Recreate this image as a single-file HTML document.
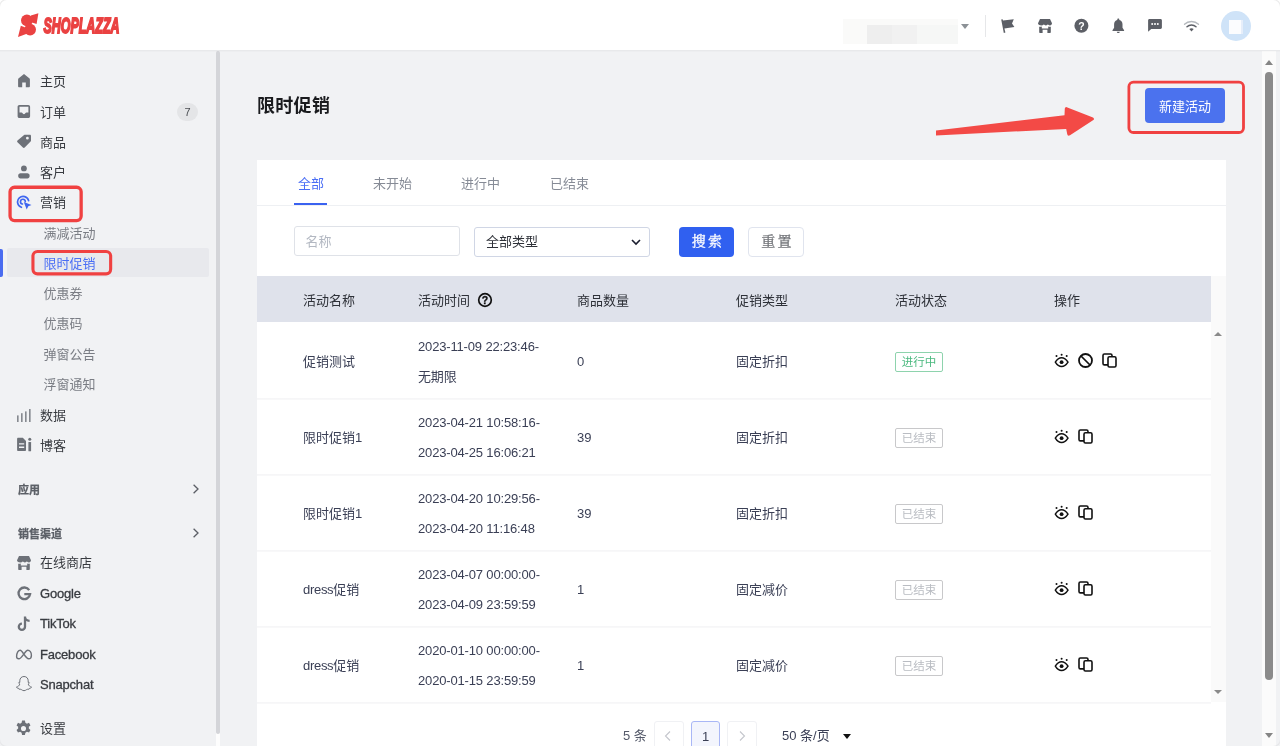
<!DOCTYPE html>
<html lang="zh-CN">
<head>
<meta charset="utf-8">
<title>限时促销</title>
<style>
*{box-sizing:border-box;margin:0;padding:0}
html,body{width:1280px;height:746px;overflow:hidden;background:#f1f2f4}
body{position:relative;will-change:transform;font-family:"Liberation Sans","Noto Sans CJK SC",sans-serif;font-size:13px;color:#3a3f52}
.abs{position:absolute}
/* header */
#hdr{position:absolute;left:0;top:0;width:1280px;height:50px;background:#fff;box-shadow:0 1px 0 #e8e9eb,0 2px 1px rgba(0,0,0,.015);z-index:5}
/* sidebar */
#side{position:absolute;left:0;top:50px;width:216px;height:696px;background:#f1f2f4}
#sbar{position:absolute;left:216px;top:51px;width:4px;height:683px;background:#d4d5d9;border-radius:2px;z-index:2}
.mi{position:absolute;left:40px;height:20px;line-height:20px;font-size:13px;color:#383b40;white-space:nowrap}
.smi{position:absolute;left:43.6px;height:20px;line-height:20px;font-size:13px;color:#7a7d84;white-space:nowrap}
.ic{position:absolute;left:16px;width:16px;height:16px}
.sec{position:absolute;left:18px;font-size:11px;font-weight:bold;color:#5c6067;height:16px;line-height:16px;-webkit-text-stroke:.25px #5c6067}
/* main */
#card{position:absolute;left:257px;top:160px;width:969px;height:586px;background:#fff}
.tab{position:absolute;top:174px;height:20px;line-height:20px;font-size:13px;color:#868b96;white-space:nowrap}
.th{position:absolute;top:291px;height:20px;line-height:20px;font-size:13px;color:#2e3138;white-space:nowrap}
.td{position:absolute;height:20px;line-height:20px;font-size:13px;color:#3a3f55;white-space:nowrap}
.dt{letter-spacing:-.16px}
.rowline{position:absolute;left:257px;width:954px;height:2px;background:linear-gradient(#f5f5f7,#f9f9fa)}
.tag{position:absolute;left:895px;width:48px;height:20px;border:1px solid #c8c8ca;border-radius:2px;font-size:11.5px;line-height:18px;text-align:center;color:#b9bcc2;background:#fff}
.tag.on{border-color:#8ed3ad;color:#4bb97f}
</style>
</head>
<body>
<div id="hdr">
<svg class="abs" style="left:18px;top:13px" width="21" height="25" viewBox="0 0 21 25"><g fill="#ea4242"><circle cx="8.900" cy="7.300" r="5.900"/><circle cx="12.100" cy="16.600" r="5.900"/><path d="M12.800 2.400L20.400 0.200L18.600 11L14 9.600Z"/><path d="M2.800 12.800L0 24L8.200 21L6.800 14.200Z"/></g></svg>
<svg class="abs" style="left:40px;top:12px" width="84" height="26" viewBox="0 0 84 26"><text x="7" y="21.100" font-family="Liberation Sans, sans-serif" font-weight="bold" font-style="italic" font-size="22" fill="#ea4242" stroke="#ea4242" stroke-width="1.900" stroke-linejoin="miter" transform="scale(0.5,1)" textLength="152" lengthAdjust="spacingAndGlyphs">SHOPLAZZA</text></svg>
<div class="abs" style="left:843px;top:19px;width:115px;height:25px;background:#fafaf9"></div>
<div class="abs" style="left:867px;top:25px;width:25px;height:19px;background:#eeeeee"></div>
<div class="abs" style="left:892px;top:25px;width:25px;height:19px;background:#f1f1f1"></div>
<div class="abs" style="left:917px;top:25px;width:41px;height:19px;background:#f6f7f6"></div>
<div class="abs" style="left:961px;top:24px;width:0;height:0;border-left:4px solid transparent;border-right:4px solid transparent;border-top:5px solid #8c9196"></div>
<div class="abs" style="left:985px;top:15px;width:1px;height:22px;background:#e6e7e9"></div>
<svg class="abs" style="left:1000px;top:18px" width="16" height="16" viewBox="0 0 16 16"><path fill="#5c5f66" d="M1.2 1.6L2.6 1.2L3 2.6L13.8 1.2L12 5.6L14.4 9L4.4 10.4L5.4 14.6L3.8 15Z"/></svg>
<svg class="abs" style="left:1037px;top:18px" width="16" height="16" viewBox="0 0 16 16"><path fill="#5c5f66" d="M3 1h10l2 4.2c0 1.2-.9 2.2-2.1 2.2-.9 0-1.6-.5-2-1.200-.4.700-1.100 1.200-2 1.200s-1.600-.5-2-1.200c-.4.700-1.100 1.200-2 1.200C1.900 7.400 1 6.400 1 5.200ZM2.200 8.700c.8.300 1.800.2 2.600-.3V10.500h6.400V8.400c.8.500 1.800.6 2.600.3V14c0 .6-.4 1-1 1h-2.400v-3.200h-4.800V15H3.200c-.6 0-1-.4-1-1Z"/></svg>
<svg class="abs" style="left:1074px;top:18px" width="15" height="15" viewBox="0 0 15 15"><circle cx="7.4" cy="7.700" r="7" fill="#5c5f66"/><text x="7.400" y="11.600" font-family="Liberation Sans, sans-serif" font-weight="bold" font-size="10.500" text-anchor="middle" fill="#fff">?</text></svg>
<svg class="abs" style="left:1111px;top:18px" width="15" height="16" viewBox="0 0 15 16"><path fill="#5c5f66" d="M7.300 0.600c.6 0 1 .4 1 1v.3c2 .5 3.200 2.200 3.200 4.400v3.500l1.600 2.400v.8H1.500v-.8l1.600-2.400V6.300c0-2.200 1.200-3.900 3.200-4.400v-.3c0-.6.400-1 1-1ZM5.800 13.700h3c0 .8-.7 1.300-1.500 1.300s-1.500-.5-1.500-1.300Z"/></svg>
<svg class="abs" style="left:1147px;top:18px" width="16" height="16" viewBox="0 0 16 16"><path fill="#5c5f66" d="M2.500 1h11c.8 0 1.400.6 1.400 1.400v7.200c0 .8-.6 1.400-1.400 1.400H4.200L1.100 13.700V2.400C1.100 1.600 1.700 1 2.500 1Z"/><g fill="#fff"><circle cx="5.200" cy="6" r="1"/><circle cx="8" cy="6" r="1"/><circle cx="10.800" cy="6" r="1"/></g></svg>
<svg class="abs" style="left:1183px;top:19px" width="17" height="14" viewBox="0 0 17 14"><g fill="none" stroke-linecap="round"><path d="M1.500 5.200C5.300 1.600 11.700 1.600 15.500 5.200" stroke="#b4b8bd" stroke-width="1.300"/><path d="M4 7.700C6.500 5.400 10.500 5.400 13 7.700" stroke="#5c5f66" stroke-width="1.500"/></g><path fill="#5c5f66" d="M6.300 10C7.500 8.900 9.500 8.900 10.700 10L8.500 12.400Z"/></svg>
<div class="abs" style="left:1221px;top:11px;width:30px;height:30px;border-radius:50%;background:#cfe3f8"></div>
<div class="abs" style="left:1229px;top:20px;width:14px;height:14px;background:#fbfcfe;border-right:2px solid #e6eefa"></div>
</div>
<div id="side">
<!-- all coords relative to body; #side is static bg -->
</div>
<div id="nav">
<svg class="abs" style="left:17px;top:73px" width="14" height="15" viewBox="0 0 14 15"><path fill="#6d7178" d="M7 1L12.300 5.200c.4.300.6.700.6 1.200V13.200c0 .6-.5 1.100-1.100 1.100H8.800V9.600H5.200v4.700H2.200c-.6 0-1.100-.5-1.100-1.100V6.400c0-.5.200-.9.600-1.200Z"/></svg>
<div class="mi" style="top:71.9px;">主页</div>
<svg class="abs" style="left:17px;top:105px" width="14" height="14" viewBox="0 0 14 14"><path fill="#6d7178" fill-rule="evenodd" d="M2.400 0H11.300c1 0 1.800.8 1.800 1.800V11.200c0 1-.8 1.800-1.800 1.800H2.400c-1 0-1.800-.8-1.800-1.800V1.800C.6.800 1.400 0 2.400 0ZM2.500 1.700V7.600H4.600c.4 0 .6.200.8.500.3.700.8 1.100 1.550 1.100s1.250-.4 1.550-1.100c.2-.3.400-.5.800-.5h2.100V1.700Z"/></svg>
<div class="mi" style="top:103.2px;">订单</div>
<div class="abs" style="left:177px;top:102.5px;width:21px;height:18px;border-radius:9px;background:#e4e5e7;font-size:11px;line-height:18px;text-align:center;color:#4a4d52">7</div>
<svg class="abs" style="left:16px;top:134px" width="16" height="15" viewBox="0 0 16 15"><path fill="#6d7178" fill-rule="evenodd" d="M9 0.700h4.800c.7 0 1.200.5 1.200 1.200V6.600c0 .4-.1.700-.4.900L8.700 13.600c-.5.500-1.300.5-1.800 0L1.500 8.300c-.5-.5-.5-1.300 0-1.800L8.100 1.100c.2-.3.500-.4.900-.4ZM11.400 2.800a1.400 1.400 0 1 0 0 2.800 1.400 1.400 0 0 0 0-2.800Z"/></svg>
<div class="mi" style="top:132.6px;">商品</div>
<svg class="abs" style="left:17px;top:164px" width="14" height="15" viewBox="0 0 14 15"><circle cx="6.900" cy="4.400" r="2.900" fill="#6d7178"/><path fill="#6d7178" d="M3.400 9.300h7c1.200 0 2.200 1 2.200 2.200v.7c0 1.200-1 2.200-2.200 2.200h-7c-1.200 0-2.200-1-2.200-2.200v-.7c0-1.200 1-2.200 2.200-2.200Z"/></svg>
<div class="mi" style="top:163.0px;">客户</div>
<svg class="abs" style="left:16px;top:195px" width="16" height="15" viewBox="0 0 16 15"><g fill="none" stroke="#3f66f0" stroke-width="1.700" stroke-linecap="round"><path d="M12.600 5.600A5.600 5.600 0 1 0 5.400 12.300"/><path d="M9.300 6.600A2.400 2.400 0 1 0 6.400 9"/></g><path fill="#3f66f0" d="M7.800 7L15.500 9.900L12.300 11.200L10.700 14.500Z"/></svg>
<div class="mi" style="top:193.0px;">营销</div>
<div class="smi" style="top:223.6px;">满减活动</div>
<div class="abs" style="left:7px;top:248px;width:202px;height:29px;background:#e8e9ed;border-radius:2px"></div>
<div class="abs" style="left:0;top:249px;width:3px;height:28px;background:#4a6cf0;border-radius:0 2px 2px 0"></div>
<div class="smi" style="top:253.6px;color:#4a6ef5">限时促销</div>
<div class="smi" style="top:284.0px;">优惠券</div>
<div class="smi" style="top:314.2px;">优惠码</div>
<div class="smi" style="top:344.6px;">弹窗公告</div>
<div class="smi" style="top:375.0px;">浮窗通知</div>
<svg class="abs" style="left:16px;top:408px" width="16" height="15" viewBox="0 0 16 15"><g fill="#6d7178"><rect x="1.200" y="7.400" width="1.300" height="6.600"/><rect x="5.200" y="5.200" width="1.300" height="8.800"/><rect x="9.200" y="3.400" width="1.300" height="10.600"/><rect x="13.200" y="1" width="1.300" height="13"/></g></svg>
<div class="mi" style="top:406.4px;">数据</div>
<svg class="abs" style="left:16px;top:437px" width="16" height="15" viewBox="0 0 16 15"><path fill="#6d7178" fill-rule="evenodd" d="M1.200 0.800h5.600L10 4v9c0 .6-.5 1.100-1.100 1.100H2.200c-.6 0-1.100-.5-1.100-1.100V1.900c0-.6.500-1.100 1.100-1.100ZM3 6.300v1.300h5.200V6.300ZM3 9.600v1.300h5.200V9.600Z"/><rect x="12.400" y="5" width="2.700" height="9.300" rx=".6" fill="#6d7178"/><circle cx="13.750" cy="2.300" r="1.500" fill="#6d7178"/></svg>
<div class="mi" style="top:435.6px;">博客</div>
<div class="sec" style="top:481.5px">应用</div>
<svg class="abs" style="left:191px;top:483px" width="9" height="12" viewBox="0 0 9 12"><path d="M2.600 1.800L7 6L2.600 10.200" fill="none" stroke="#5c5f66" stroke-width="1.300"/></svg>
<div class="sec" style="top:525.8px">销售渠道</div>
<svg class="abs" style="left:191px;top:527px" width="9" height="12" viewBox="0 0 9 12"><path d="M2.600 1.800L7 6L2.600 10.200" fill="none" stroke="#5c5f66" stroke-width="1.300"/></svg>
<svg class="abs" style="left:16px;top:555px" width="16" height="16" viewBox="0 0 16 16"><path fill="#6d7178" d="M3 1h10l2 4.200c0 1.200-.9 2.200-2.100 2.200-.9 0-1.600-.5-2-1.200-.4.700-1.100 1.200-2 1.200s-1.600-.5-2-1.200c-.4.700-1.100 1.200-2 1.200C1.900 7.400 1 6.400 1 5.200ZM2.200 8.700c.8.300 1.800.2 2.600-.3V10.500h6.400V8.400c.8.500 1.800.6 2.600.3V14c0 .6-.4 1-1 1h-2.400v-3.200h-4.800V15H3.200c-.6 0-1-.4-1-1Z"/></svg>
<div class="mi" style="top:553.4px;">在线商店</div>
<svg class="abs" style="left:16px;top:586px" width="16" height="16" viewBox="0 0 16 16"><path d="M13.200 4.100A5.800 5.800 0 1 0 14.100 8.100H8.300" fill="none" stroke="#6d7178" stroke-width="2.300"/></svg>
<div class="mi" style="top:584.2px;-webkit-text-stroke:.3px #383b40;letter-spacing:-.2px">Google</div>
<svg class="abs" style="left:16px;top:616px" width="16" height="16" viewBox="0 0 16 16"><path d="M9 0.400V10.700A3.100 3.100 0 1 1 5.900 7.600M9 1C9.200 3.300 10.900 4.700 13.600 4.800" fill="none" stroke="#6d7178" stroke-width="2.300"/></svg>
<div class="mi" style="top:614.2px;-webkit-text-stroke:.3px #383b40;letter-spacing:-.2px">TikTok</div>
<svg class="abs" style="left:15px;top:648px" width="18" height="13" viewBox="0 0 18 13"><path d="M1.600 8.600C1.600 4.800 3.400 2.200 5.200 2.200C7.400 2.200 10.600 10.800 13.600 10.800C15.400 10.800 16.400 9.400 16.400 7.400C16.400 4.600 14.800 2.200 12.800 2.200C10 2.200 7 10.800 3.800 10.800C2.400 10.800 1.600 10 1.600 8.600Z" fill="none" stroke="#6d7178" stroke-width="1.400"/></svg>
<div class="mi" style="top:644.7px;-webkit-text-stroke:.3px #383b40;letter-spacing:-.2px">Facebook</div>
<svg class="abs" style="left:15px;top:675px" width="18" height="17" viewBox="0 0 18 17"><path d="M9 1.500C11.600 1.500 13.200 3.400 13.200 5.800V7.400C13.800 7.300 14.500 7.300 14.500 7.900C14.500 8.500 13.400 8.700 13.200 9.100C13.800 10.700 15 11.700 16.600 12.200C16.300 13 15.200 13.100 14.500 13.300C14.400 13.700 14.400 14.100 14 14.200C13 14.200 12.400 14.100 11.600 14.600C10.900 15.100 10.100 15.700 9 15.700C7.900 15.700 7.100 15.100 6.400 14.600C5.600 14.100 5 14.200 4 14.200C3.600 14.100 3.600 13.700 3.500 13.300C2.800 13.100 1.700 13 1.400 12.200C3 11.700 4.200 10.700 4.800 9.100C4.600 8.700 3.500 8.500 3.500 7.900C3.500 7.300 4.200 7.300 4.800 7.400V5.800C4.800 3.400 6.400 1.500 9 1.500Z" fill="none" stroke="#6d7178" stroke-width="1" stroke-linejoin="round"/></svg>
<div class="mi" style="top:674.7px;-webkit-text-stroke:.3px #383b40;letter-spacing:-.2px">Snapchat</div>
<svg class="abs" style="left:15px;top:720px" width="17" height="17" viewBox="0.300 0.300 15.400 15.400"><path fill="#6d7178" fill-rule="evenodd" d="M6.700 0.800h2.600l.4 2c.5.200 1 .5 1.400.8l1.900-.7 1.300 2.300-1.500 1.300c.1.500.1 1.100 0 1.600l1.500 1.300-1.300 2.300-1.900-.7c-.4.300-.9.600-1.400.8l-.4 2H6.700l-.4-2c-.5-.2-1-.5-1.400-.8l-1.900.7-1.300-2.300 1.500-1.300c-.1-.5-.1-1.100 0-1.600L1.700 5.200 3 2.900l1.900.7c.4-.3.900-.6 1.400-.8ZM8 5.700a2.300 2.300 0 1 0 0 4.600 2.300 2.300 0 0 0 0-4.600Z"/></svg>
<div class="mi" style="top:719.2px;">设置</div>
<!-- red annotation boxes -->
<svg class="abs" style="left:6px;top:183px" width="80" height="42" viewBox="6 183 80 42"><rect x="10.05" y="187.25" width="71.10" height="33.30" rx="4.5" fill="none" stroke="#f04141" stroke-width="3.3"/></svg>
<svg class="abs" style="left:29px;top:247px" width="86" height="31" viewBox="29 247 86 31"><rect x="32.95" y="251.45" width="77.70" height="22.40" rx="4.5" fill="none" stroke="#f04141" stroke-width="3.1"/></svg>
</div>
<div class="abs" style="left:216px;top:733px;width:4px;height:13px;background:#fdfdfd"></div>
<div id="sbar"></div>
<div id="card"></div>
<div class="abs" style="left:257px;top:96px;font-size:18px;font-weight:bold;line-height:20px;color:#1a1b1e;white-space:nowrap;letter-spacing:.3px">限时促销</div>
<svg class="abs" style="left:930px;top:100px" width="170" height="42" viewBox="930 100 170 42"><path d="M936 130.600L1064.500 115.300L1064.800 108.600Q1065.200 106.400 1067.400 107.400L1093 117.600Q1095 118.900 1093 120.200L1070 135.200Q1067.600 136.600 1067.200 134L1066.200 128.900L936 135.400Z" fill="#f34a46"/></svg>
<div class="abs" style="left:1145px;top:88px;width:80px;height:35px;border-radius:4px;background:#4b72ee;color:#fff;font-size:13px;line-height:37px;text-align:center">新建活动</div>
<svg class="abs" style="left:1125px;top:78px" width="123" height="59" viewBox="1125 78 123 59"><rect x="1128.90" y="82.10" width="114.60" height="50.40" rx="4.5" fill="none" stroke="#f04141" stroke-width="2.8"/></svg>
<!-- tabs -->
<div class="tab" style="left:298px;color:#4a6ef5">全部</div>
<div class="tab" style="left:373px">未开始</div>
<div class="tab" style="left:461px">进行中</div>
<div class="tab" style="left:550px">已结束</div>
<div class="abs" style="left:257px;top:205px;width:969px;height:1px;background:#eef0f3"></div>
<div class="abs" style="left:294px;top:203px;width:33px;height:2px;background:#3a62f0"></div>
<!-- filters -->
<div class="abs" style="left:294px;top:226px;width:166px;height:30px;border:1px solid #dfe2e8;border-radius:3px;background:#fff;font-size:13px;line-height:30px;padding-left:10.500px;color:#b3b8c2">名称</div>
<div class="abs" style="left:474px;top:227px;width:176px;height:30px;border:1px solid #d0d6e5;border-radius:3px;background:#fff;font-size:13px;line-height:28px;padding-left:11px;color:#2e3138">全部类型</div>
<svg class="abs" style="left:630px;top:237px" width="12" height="10" viewBox="0 0 12 10"><path d="M2 3L6 7L10 3" fill="none" stroke="#1a1d2e" stroke-width="1.600"/></svg>
<div class="abs" style="left:679px;top:227px;width:55px;height:30px;border-radius:4px;background:#3060f0;color:#fff;font-family:'Liberation Serif','Noto Serif CJK SC',serif;font-size:14px;line-height:29px;text-align:center;letter-spacing:-.7px;padding-left:0;-webkit-text-stroke:.3px #fff">搜 索</div>
<div class="abs" style="left:748px;top:227px;width:56px;height:30px;border-radius:4px;border:1px solid #e0e4ee;background:#fff;color:#6e7075;font-family:'Liberation Serif','Noto Serif CJK SC',serif;font-size:14px;line-height:28px;text-align:center;letter-spacing:-.7px;padding-left:0;-webkit-text-stroke:.25px #6e7075">重 置</div>
<!-- table head -->
<div class="abs" style="left:257px;top:276px;width:954px;height:46px;background:#dfe2eb"></div>
<div class="abs" style="left:1211px;top:276px;width:15px;height:426px;background:#fafafa"></div>
<div class="th" style="left:303px">活动名称</div>
<div class="th" style="left:418px">活动时间</div>
<svg class="abs" style="left:477px;top:292px" width="16" height="16" viewBox="0 0 16 16"><circle cx="8" cy="8" r="6.300" fill="none" stroke="#111" stroke-width="1.700"/><text x="8" y="11.700" font-family="Liberation Sans, sans-serif" font-weight="bold" font-size="10.500" text-anchor="middle" fill="#111" stroke="#111" stroke-width=".3">?</text></svg>
<div class="th" style="left:577px">商品数量</div>
<div class="th" style="left:736px">促销类型</div>
<div class="th" style="left:895px">活动状态</div>
<div class="th" style="left:1054px">操作</div>
<div class="td" style="left:303px;top:351.8px">促销测试</div>
<div class="td dt" style="left:418px;top:336.8px">2023-11-09 22:23:46-</div>
<div class="td dt" style="left:418px;top:366.8px">无期限</div>
<div class="td" style="left:577px;top:351.8px">0</div>
<div class="td" style="left:736px;top:351.8px">固定折扣</div>
<div class="tag on" style="top:352px">进行中</div>
<svg class="abs" style="left:1053px;top:352px" width="17" height="16" viewBox="0 0 17 16"><path d="M2.300 10.200Q5 5.850 8.600 5.850Q12.200 5.850 15 10.200Q12.200 14.550 8.600 14.550Q5 14.550 2.300 10.200Z" fill="none" stroke="#111" stroke-width="1.500" stroke-linejoin="round"/><circle cx="8.600" cy="10.200" r="1.900" fill="#111"/><g fill="#111"><circle cx="3.500" cy="4.100" r="1"/><circle cx="8.600" cy="2.700" r="1"/><circle cx="13.700" cy="4.100" r="1"/></g></svg>
<svg class="abs" style="left:1077px;top:352px" width="17" height="17" viewBox="0 0 17 17"><circle cx="8.500" cy="8.500" r="6.500" fill="none" stroke="#111" stroke-width="1.800"/><path d="M4 4L13 13" stroke="#111" stroke-width="1.700"/></svg>
<svg class="abs" style="left:1100px;top:352px" width="17" height="17" viewBox="0 0 17 17"><rect x="3" y="2" width="9" height="10.900" rx="1.400" fill="none" stroke="#111" stroke-width="1.600"/><rect x="8" y="4.800" width="8" height="10.200" rx="1.400" fill="#fff" stroke="#111" stroke-width="1.600"/></svg>
<div class="rowline" style="top:398px"></div>
<div class="td" style="left:303px;top:427.8px">限时促销1</div>
<div class="td dt" style="left:418px;top:412.8px">2023-04-21 10:58:16-</div>
<div class="td dt" style="left:418px;top:442.8px">2023-04-25 16:06:21</div>
<div class="td" style="left:577px;top:427.8px">39</div>
<div class="td" style="left:736px;top:427.8px">固定折扣</div>
<div class="tag" style="top:428px">已结束</div>
<svg class="abs" style="left:1053px;top:428px" width="17" height="16" viewBox="0 0 17 16"><path d="M2.300 10.200Q5 5.850 8.600 5.850Q12.200 5.850 15 10.200Q12.200 14.550 8.600 14.550Q5 14.550 2.300 10.200Z" fill="none" stroke="#111" stroke-width="1.500" stroke-linejoin="round"/><circle cx="8.600" cy="10.200" r="1.900" fill="#111"/><g fill="#111"><circle cx="3.500" cy="4.100" r="1"/><circle cx="8.600" cy="2.700" r="1"/><circle cx="13.700" cy="4.100" r="1"/></g></svg>
<svg class="abs" style="left:1076px;top:428px" width="17" height="17" viewBox="0 0 17 17"><rect x="3" y="2" width="9" height="10.900" rx="1.400" fill="none" stroke="#111" stroke-width="1.600"/><rect x="8" y="4.800" width="8" height="10.200" rx="1.400" fill="#fff" stroke="#111" stroke-width="1.600"/></svg>
<div class="rowline" style="top:474px"></div>
<div class="td" style="left:303px;top:503.8px">限时促销1</div>
<div class="td dt" style="left:418px;top:488.8px">2023-04-20 10:29:56-</div>
<div class="td dt" style="left:418px;top:518.8px">2023-04-20 11:16:48</div>
<div class="td" style="left:577px;top:503.8px">39</div>
<div class="td" style="left:736px;top:503.8px">固定折扣</div>
<div class="tag" style="top:504px">已结束</div>
<svg class="abs" style="left:1053px;top:504px" width="17" height="16" viewBox="0 0 17 16"><path d="M2.300 10.200Q5 5.850 8.600 5.850Q12.200 5.850 15 10.200Q12.200 14.550 8.600 14.550Q5 14.550 2.300 10.200Z" fill="none" stroke="#111" stroke-width="1.500" stroke-linejoin="round"/><circle cx="8.600" cy="10.200" r="1.900" fill="#111"/><g fill="#111"><circle cx="3.500" cy="4.100" r="1"/><circle cx="8.600" cy="2.700" r="1"/><circle cx="13.700" cy="4.100" r="1"/></g></svg>
<svg class="abs" style="left:1076px;top:504px" width="17" height="17" viewBox="0 0 17 17"><rect x="3" y="2" width="9" height="10.900" rx="1.400" fill="none" stroke="#111" stroke-width="1.600"/><rect x="8" y="4.800" width="8" height="10.200" rx="1.400" fill="#fff" stroke="#111" stroke-width="1.600"/></svg>
<div class="rowline" style="top:550px"></div>
<div class="td" style="left:303px;top:579.8px"><span style="letter-spacing:-.3px">dress</span>促销</div>
<div class="td dt" style="left:418px;top:564.8px">2023-04-07 00:00:00-</div>
<div class="td dt" style="left:418px;top:594.8px">2023-04-09 23:59:59</div>
<div class="td" style="left:577px;top:579.8px">1</div>
<div class="td" style="left:736px;top:579.8px">固定减价</div>
<div class="tag" style="top:580px">已结束</div>
<svg class="abs" style="left:1053px;top:580px" width="17" height="16" viewBox="0 0 17 16"><path d="M2.300 10.200Q5 5.850 8.600 5.850Q12.200 5.850 15 10.200Q12.200 14.550 8.600 14.550Q5 14.550 2.300 10.200Z" fill="none" stroke="#111" stroke-width="1.500" stroke-linejoin="round"/><circle cx="8.600" cy="10.200" r="1.900" fill="#111"/><g fill="#111"><circle cx="3.500" cy="4.100" r="1"/><circle cx="8.600" cy="2.700" r="1"/><circle cx="13.700" cy="4.100" r="1"/></g></svg>
<svg class="abs" style="left:1076px;top:580px" width="17" height="17" viewBox="0 0 17 17"><rect x="3" y="2" width="9" height="10.900" rx="1.400" fill="none" stroke="#111" stroke-width="1.600"/><rect x="8" y="4.800" width="8" height="10.200" rx="1.400" fill="#fff" stroke="#111" stroke-width="1.600"/></svg>
<div class="rowline" style="top:626px"></div>
<div class="td" style="left:303px;top:655.8px"><span style="letter-spacing:-.3px">dress</span>促销</div>
<div class="td dt" style="left:418px;top:640.8px">2020-01-10 00:00:00-</div>
<div class="td dt" style="left:418px;top:670.8px">2020-01-15 23:59:59</div>
<div class="td" style="left:577px;top:655.8px">1</div>
<div class="td" style="left:736px;top:655.8px">固定减价</div>
<div class="tag" style="top:656px">已结束</div>
<svg class="abs" style="left:1053px;top:656px" width="17" height="16" viewBox="0 0 17 16"><path d="M2.300 10.200Q5 5.850 8.600 5.850Q12.200 5.850 15 10.200Q12.200 14.550 8.600 14.550Q5 14.550 2.300 10.200Z" fill="none" stroke="#111" stroke-width="1.500" stroke-linejoin="round"/><circle cx="8.600" cy="10.200" r="1.900" fill="#111"/><g fill="#111"><circle cx="3.500" cy="4.100" r="1"/><circle cx="8.600" cy="2.700" r="1"/><circle cx="13.700" cy="4.100" r="1"/></g></svg>
<svg class="abs" style="left:1076px;top:656px" width="17" height="17" viewBox="0 0 17 17"><rect x="3" y="2" width="9" height="10.900" rx="1.400" fill="none" stroke="#111" stroke-width="1.600"/><rect x="8" y="4.800" width="8" height="10.200" rx="1.400" fill="#fff" stroke="#111" stroke-width="1.600"/></svg>
<div class="rowline" style="top:702px"></div>
<!-- inner scroll arrows -->
<div class="abs" style="left:1214px;top:331.500px;width:0;height:0;border-left:4.500px solid transparent;border-right:4.500px solid transparent;border-bottom:4.500px solid #8a8a8a"></div>
<div class="abs" style="left:1214px;top:690px;width:0;height:0;border-left:4.500px solid transparent;border-right:4.500px solid transparent;border-top:4.500px solid #8a8a8a"></div>
<!-- pagination -->
<div class="abs" style="left:623px;top:726px;height:20px;line-height:20px;font-size:13px;color:#555a6a;white-space:nowrap">5 条</div>
<div class="abs" style="left:654px;top:721px;width:30px;height:30px;border:1px solid #f0f1f4;border-radius:3px;background:#fff"></div>
<svg class="abs" style="left:663px;top:730px" width="10" height="12" viewBox="0 0 10 12"><path d="M7 1.500L2.500 6L7 10.500" fill="none" stroke="#c4c6cc" stroke-width="1.100"/></svg>
<div class="abs" style="left:691px;top:721px;width:29px;height:30px;border:1px solid #a9b7f6;border-radius:3px;background:#f3f5fd;font-size:13px;line-height:29px;text-align:center;color:#3a3f55">1</div>
<div class="abs" style="left:727px;top:721px;width:30px;height:30px;border:1px solid #f0f1f4;border-radius:3px;background:#fff"></div>
<svg class="abs" style="left:737px;top:730px" width="10" height="12" viewBox="0 0 10 12"><path d="M3 1.500L7.500 6L3 10.500" fill="none" stroke="#c4c6cc" stroke-width="1.100"/></svg>
<div class="abs" style="left:782px;top:726px;height:20px;line-height:20px;font-size:13px;color:#3a3f55;white-space:nowrap">50 条/页</div>
<div class="abs" style="left:843px;top:734px;width:0;height:0;border-left:4px solid transparent;border-right:4px solid transparent;border-top:5.500px solid #111"></div>
<!-- page scrollbar -->
<div class="abs" style="left:1262px;top:51px;width:14px;height:695px;background:#fbfbfb"></div>
<div class="abs" style="left:1265px;top:59.500px;width:0;height:0;border-left:4.500px solid transparent;border-right:4.500px solid transparent;border-bottom:5px solid #858585"></div>
<div class="abs" style="left:1265px;top:72px;width:8px;height:608px;border-radius:4px;background:#8b8b8b"></div>
<div class="abs" style="left:1265px;top:732.500px;width:0;height:0;border-left:4.500px solid transparent;border-right:4.500px solid transparent;border-top:5px solid #858585"></div>

<div class="abs" style="left:-1px;top:-1px;width:10px;height:10px;border-top-left-radius:8px;border-left:1.500px solid #ececec;border-top:1.500px solid #ececec;z-index:9"></div>
<div class="abs" style="left:1271px;top:-1px;width:10px;height:10px;border-top-right-radius:8px;border-right:1.500px solid #ececec;border-top:1.500px solid #ececec;z-index:9"></div>
<div class="abs" style="left:-1px;top:737px;width:10px;height:10px;border-bottom-left-radius:8px;border-left:1.500px solid #e6e7e9;border-bottom:1.500px solid #e6e7e9;z-index:9"></div>
<div class="abs" style="left:1271px;top:737px;width:10px;height:10px;border-bottom-right-radius:8px;border-right:1.500px solid #e6e7e9;border-bottom:1.500px solid #e6e7e9;z-index:9"></div>
</body>
</html>
